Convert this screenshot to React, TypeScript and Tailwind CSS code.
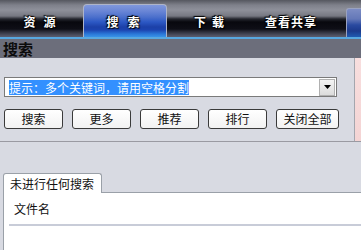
import React from "react";

const tabText = "text-white font-bold text-[12px] leading-none [text-shadow:0_0_1px_#000,0_0_2px_#000,1px_1px_1px_#000,-1px_-1px_1px_#000]";

function Btn({ label, w }: { label: string; w: string }) {
  return (
    <div
      className={`${w} h-[20px] flex items-center justify-center rounded-[3px] border border-[#3a3a3a] bg-[linear-gradient(#ffffff,#f2f2f2)] text-[12px] text-[#111] leading-none`}
    >
      {label}
    </div>
  );
}

function TwoChar({ a, b, gap }: { a: string; b: string; gap: string }) {
  return (
    <span className={`flex ${gap}`}>
      <span className={tabText}>{a}</span>
      <span className={tabText}>{b}</span>
    </span>
  );
}

export default function App() {
  return (
    <div className="w-[361px] h-[250px] overflow-hidden bg-[#d8dae2] flex flex-col font-['Noto_Sans_CJK_SC','Noto_Sans',sans-serif]">
      {/* top tab bar */}
      <div className="h-[37px] flex items-end shrink-0 bg-[linear-gradient(to_bottom,#55575f_0px,#7e808a_5px,#8e909a_10px,#767882_16px,#24262e_19px,#08080e_22px,#0e0e16_29px,#2e303c_32px,#4c4e5e_35px,#5a5c6e_37px)]">
        <div className="w-[83px] h-[37px] flex items-center justify-center pt-[7px] pr-[4px]">
          <TwoChar a="资" b="源" gap="gap-[8px]" />
        </div>
        <div className="w-[84px] h-[33px] rounded-t-[4px] border border-b-0 border-[#aeb4c8] flex items-center justify-center pt-[2px] pr-[4px] bg-[linear-gradient(to_bottom,#8098dc_0px,#6a86d6_6px,#4c70cc_12px,#2c58c4_17px,#1c40a8_22px,#1c44b0_25px,#2a78d8_29px,#3c9cee_33px)]">
          <TwoChar a="搜" b="索" gap="gap-[9px]" />
        </div>
        <div className="w-[84px] h-[37px] flex items-center justify-center pt-[7px]">
          <TwoChar a="下" b="载" gap="gap-[6px]" />
        </div>
        <div className="w-[80px] h-[37px] flex items-center justify-center pt-[7px]">
          <span className={`${tabText} tracking-[1px]`}>查看共享</span>
        </div>
        <div className="flex-1" />
        <div className="w-[15px] h-[29px] self-start mt-[8px] rounded-tl-[3px] border-l border-t border-[#9aa2c0] bg-[linear-gradient(to_bottom,#7c8cc4_0px,#6478b8_10px,#2a4aa0_16px,#1c3a8c_22px,#2060b8_29px)]" />
      </div>
      <div className="h-[2px] bg-[#58a8e0] shrink-0" />
      {/* header */}
      <div className="h-[19px] bg-[#6c6e7b] shrink-0 flex items-center pl-[3px]">
        <span className="text-[15px] font-bold text-[#0c0c0c] leading-none">搜索</span>
      </div>
      {/* main */}
      <div className="h-[83px] flex shrink-0">
        <div className="w-[354px] flex flex-col pl-[4px] pt-[19px]">
          <div className="w-[333px] h-[20px] border border-[#7a7a7a] bg-white flex items-center p-[2px] pr-[1px]">
            <div className="flex-1 h-[15px] flex items-center pl-[2px]">
              <span className="bg-[#3390ff] text-white text-[12px] leading-[15px] h-[15px]">提示：多个关键词，请用空格分割</span>
            </div>
            <div className="w-[16px] h-[17px] bg-[linear-gradient(#f4f4f4,#dcdcdc)] border border-[#b0b0b0] flex items-center justify-center">
              <svg width="7" height="4" viewBox="0 0 7 4"><path d="M0 0h7L3.5 4z" fill="#000" /></svg>
            </div>
          </div>
          <div className="flex gap-[9px] mt-[12px]">
            <Btn label="搜索" w="w-[59px]" />
            <Btn label="更多" w="w-[59px]" />
            <Btn label="推荐" w="w-[59px]" />
            <Btn label="排行" w="w-[59px]" />
            <Btn label="关闭全部" w="w-[63px]" />
          </div>
        </div>
        <div className="w-px bg-[#a4a6ae]" />
        <div className="flex-1 bg-[linear-gradient(to_bottom,#f8dede,#f4d4d4)]" />
      </div>
      <div className="h-px bg-[#9a9aa2] shrink-0" />
      {/* lower area */}
      <div className="h-[31px] shrink-0" />
      <div className="flex items-end shrink-0 pl-[3px]">
        <div className="w-[99px] h-[20px] bg-white border border-b-0 border-[#9aa0a8] rounded-t-[3px] flex items-center pl-[6px] text-[12px] text-[#111] leading-none">
          未进行任何搜索
        </div>
        <div className="flex-1 h-px bg-[#9aa0a8]" />
      </div>
      <div className="flex-1 ml-[3px] bg-white border-l border-[#9aa0a8] flex flex-col">
        <div className="h-[31px] flex items-center pl-[10px] text-[12px] text-[#111] leading-none">文件名</div>
        <div className="h-[2px] bg-[#c8ccd8] ml-[5px]" />
      </div>
    </div>
  );
}
